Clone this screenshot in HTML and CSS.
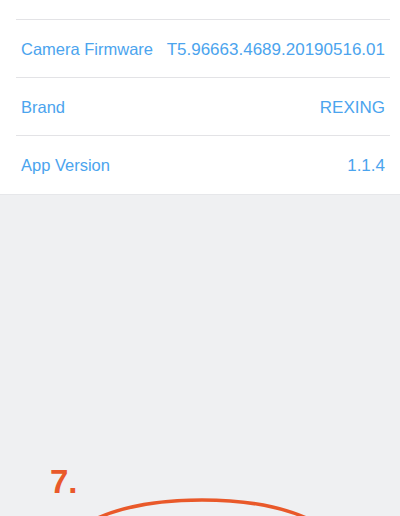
FILE: index.html
```html
<!DOCTYPE html>
<html>
<head>
<meta charset="utf-8">
<link rel="stylesheet" href="styles.css">
</head>
<body>
<div class="page">
  <section class="list">
    <div class="row"><span class="label">Camera Firmware</span><span class="value">T5.96663.4689.20190516.01</span></div>
    <div class="row"><span class="label">Brand</span><span class="value">REXING</span></div>
    <div class="row"><span class="label">App Version</span><span class="value">1.1.4</span></div>
  </section>
  <div class="step">7.</div>
  <svg class="ring" width="400" height="60" viewBox="0 0 400 60">
    <ellipse cx="202" cy="45" rx="128" ry="43" fill="none" stroke="#e9592a" stroke-width="3.5"/>
  </svg>
</div>
</body>
</html>
```

FILE: styles.css
```css
html, body {
  margin: 0;
  padding: 0;
  background: #eff0f2;
}
.page {
  position: relative;
  width: 400px;
  height: 516px;
  overflow: hidden;
  font-family: "Liberation Sans", Arial, sans-serif;
}
.list {
  background: #ffffff;
  padding-top: 19px;
  height: 175px;
  border-bottom: 1px solid #e6e7ea;
  box-sizing: content-box;
}
.row {
  height: 58px;
  margin-left: 16px;
  margin-right: 10px;
  padding-left: 5px;
  padding-right: 5px;
  padding-top: 2px;
  border-top: 1px solid #e3e3e6;
  display: flex;
  align-items: center;
  justify-content: space-between;
  box-sizing: border-box;
  color: #4ba4ee;
  font-size: 16.5px;
}
.value {
  font-size: 17px;
}
.step {
  margin-top: 270px;
  margin-left: 50px;
  color: #e9592a;
  font-weight: bold;
  font-size: 33px;
  line-height: 33px;
}
.ring {
  position: absolute;
  left: 0;
  top: 498px;
}
```
